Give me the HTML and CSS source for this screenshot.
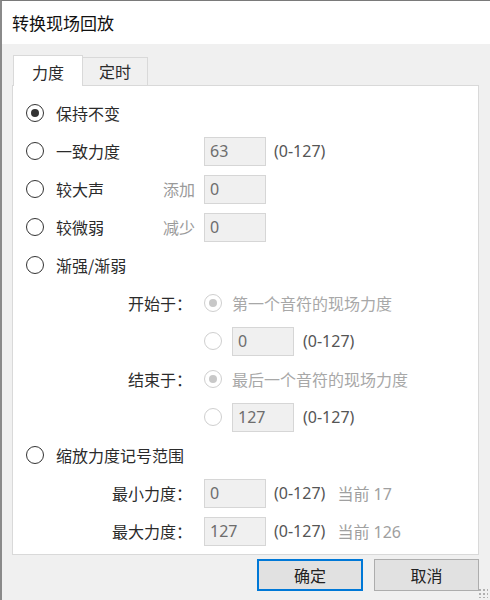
FILE: index.html
```html
<!doctype html>
<html lang="zh-CN">
<head>
  <meta charset="UTF-8">
  <title>转换现场回放</title>
  <link rel="stylesheet" href="styles.css">
</head>
<body>
  <div class="window">
    <div class="titlebar">转换现场回放</div>
    <div class="content">
      <div class="tabs">
        <div class="tab active">力度</div>
        <div class="tab">定时</div>
      </div>
      <div class="panel">
        <div class="row">
          <span class="radio checked"></span>
          <span class="label">保持不变</span>
        </div>
        <div class="row">
          <span class="radio"></span>
          <span class="label wide">一致力度</span>
          <span class="field">63</span>
          <span class="hint">(0-127)</span>
        </div>
        <div class="row">
          <span class="radio"></span>
          <span class="label short">较大声</span>
          <span class="side">添加</span>
          <span class="field">0</span>
        </div>
        <div class="row">
          <span class="radio"></span>
          <span class="label short">较微弱</span>
          <span class="side">减少</span>
          <span class="field">0</span>
        </div>
        <div class="row">
          <span class="radio"></span>
          <span class="label">渐强/渐弱</span>
        </div>
        <div class="row">
          <span class="caption">开始于：</span>
          <span class="radio off checked"></span>
          <span class="label dim">第一个音符的现场力度</span>
        </div>
        <div class="row">
          <span class="caption"></span>
          <span class="radio off"></span>
          <span class="field">0</span>
          <span class="hint">(0-127)</span>
        </div>
        <div class="row">
          <span class="caption">结束于：</span>
          <span class="radio off checked"></span>
          <span class="label dim">最后一个音符的现场力度</span>
        </div>
        <div class="row">
          <span class="caption"></span>
          <span class="radio off"></span>
          <span class="field">127</span>
          <span class="hint">(0-127)</span>
        </div>
        <div class="row">
          <span class="radio"></span>
          <span class="label">缩放力度记号范围</span>
        </div>
        <div class="row">
          <span class="caption plain">最小力度：</span>
          <span class="field">0</span>
          <span class="hint">(0-127)</span>
          <span class="current">当前 17</span>
        </div>
        <div class="row">
          <span class="caption plain">最大力度：</span>
          <span class="field">127</span>
          <span class="hint">(0-127)</span>
          <span class="current">当前 126</span>
        </div>
      </div>
      <div class="buttons">
        <div class="button default">确定</div>
        <div class="button">取消</div>
      </div>
    </div>
    <div class="grip"></div>
  </div>
</body>
</html>
```

FILE: styles.css
```css
html, body {
  margin: 0;
  height: 100%;
  overflow: hidden;
}
body {
  font-family: "Noto Sans", "Noto Sans CJK SC", sans-serif;
  font-size: 16px;
  color: #2b2b2b;
  background: #f0f0f0;
}
.window {
  position: relative;
  width: 490px;
  height: 600px;
  box-sizing: border-box;
  border-top: 1px solid #7a7a7a;
  border-left: 2px solid #8a8a8a;
  background: #f0f0f0;
}
.titlebar {
  height: 43px;
  line-height: 43px;
  padding-left: 10px;
  background: #fff;
  font-family: "Noto Sans CJK SC", sans-serif;
  font-size: 17px;
  color: #111;
}
.content {
  padding: 11px 11px 0 10px;
}
.tabs {
  display: flex;
  align-items: flex-end;
  height: 30px;
  padding-left: 1px;
}
.tab {
  box-sizing: border-box;
  width: 65px;
  height: 28px;
  line-height: 26px;
  text-align: center;
  border: 1px solid #d9d9d9;
  border-bottom: none;
  border-left: none;
  background: #f0f0f0;
  font-family: "Noto Sans CJK SC", sans-serif;
}
.tab.active {
  position: relative;
  z-index: 1;
  width: 70px;
  height: 31px;
  line-height: 33px;
  margin-bottom: -1px;
  border-left: 1px solid #d9d9d9;
  background: #fff;
}
.panel {
  box-sizing: border-box;
  height: 470px;
  padding: 8px 0 0 13px;
  border: 1px solid #d9d9d9;
  background: #fff;
}
.row {
  display: flex;
  align-items: center;
  height: 38px;
}
.radio {
  position: relative;
  flex: none;
  box-sizing: border-box;
  width: 18px;
  height: 18px;
  margin-right: 12px;
  border: 1px solid #333;
  border-radius: 50%;
}
.radio.checked::after {
  content: '';
  position: absolute;
  top: 4px;
  left: 4px;
  width: 8px;
  height: 8px;
  border-radius: 50%;
  background: #333;
}
.radio.off {
  margin-right: 10px;
  border-color: #cfcfcf;
}
.radio.off.checked::after {
  background: #c8c8c8;
}
.label {
  font-family: "Noto Sans CJK SC", sans-serif;
  white-space: nowrap;
}
.label.wide {
  width: 148px;
}
.label.short {
  width: 107px;
}
.label.dim {
  color: #a8a8a8;
}
.side {
  width: 41px;
  color: #9a9a9a;
  font-family: "Noto Sans CJK SC", sans-serif;
}
.caption {
  flex: none;
  width: 166px;
  margin-right: 12px;
  text-align: right;
  font-family: "Noto Sans CJK SC", sans-serif;
  white-space: nowrap;
}
.field {
  flex: none;
  box-sizing: border-box;
  width: 62px;
  height: 29px;
  line-height: 27px;
  padding-left: 5px;
  margin-right: 8px;
  border: 1px solid #d6d6d6;
  background: #f0f0f0;
  color: #6d6d6d;
}
.radio.off + .field {
  margin-right: 9px;
}
.hint {
  color: #555;
}
.current {
  margin-left: 12px;
  color: #a0a0a0;
}
.buttons {
  display: flex;
  justify-content: flex-end;
  gap: 11px;
  padding-top: 4px;
}
.button {
  box-sizing: border-box;
  width: 105px;
  height: 32px;
  line-height: 30px;
  text-align: center;
  border: 1px solid #adadad;
  background: #e1e1e1;
  font-family: "Noto Sans CJK SC", sans-serif;
  color: #222;
}
.button.default {
  width: 106px;
  line-height: 28px;
  border: 2px solid #0078d7;
}
.grip {
  position: absolute;
  right: 2px;
  bottom: 2px;
  width: 10px;
  height: 10px;
  background: radial-gradient(circle, #b0b0b0 1px, transparent 1.2px) 0 0 / 4px 4px;
}
```
